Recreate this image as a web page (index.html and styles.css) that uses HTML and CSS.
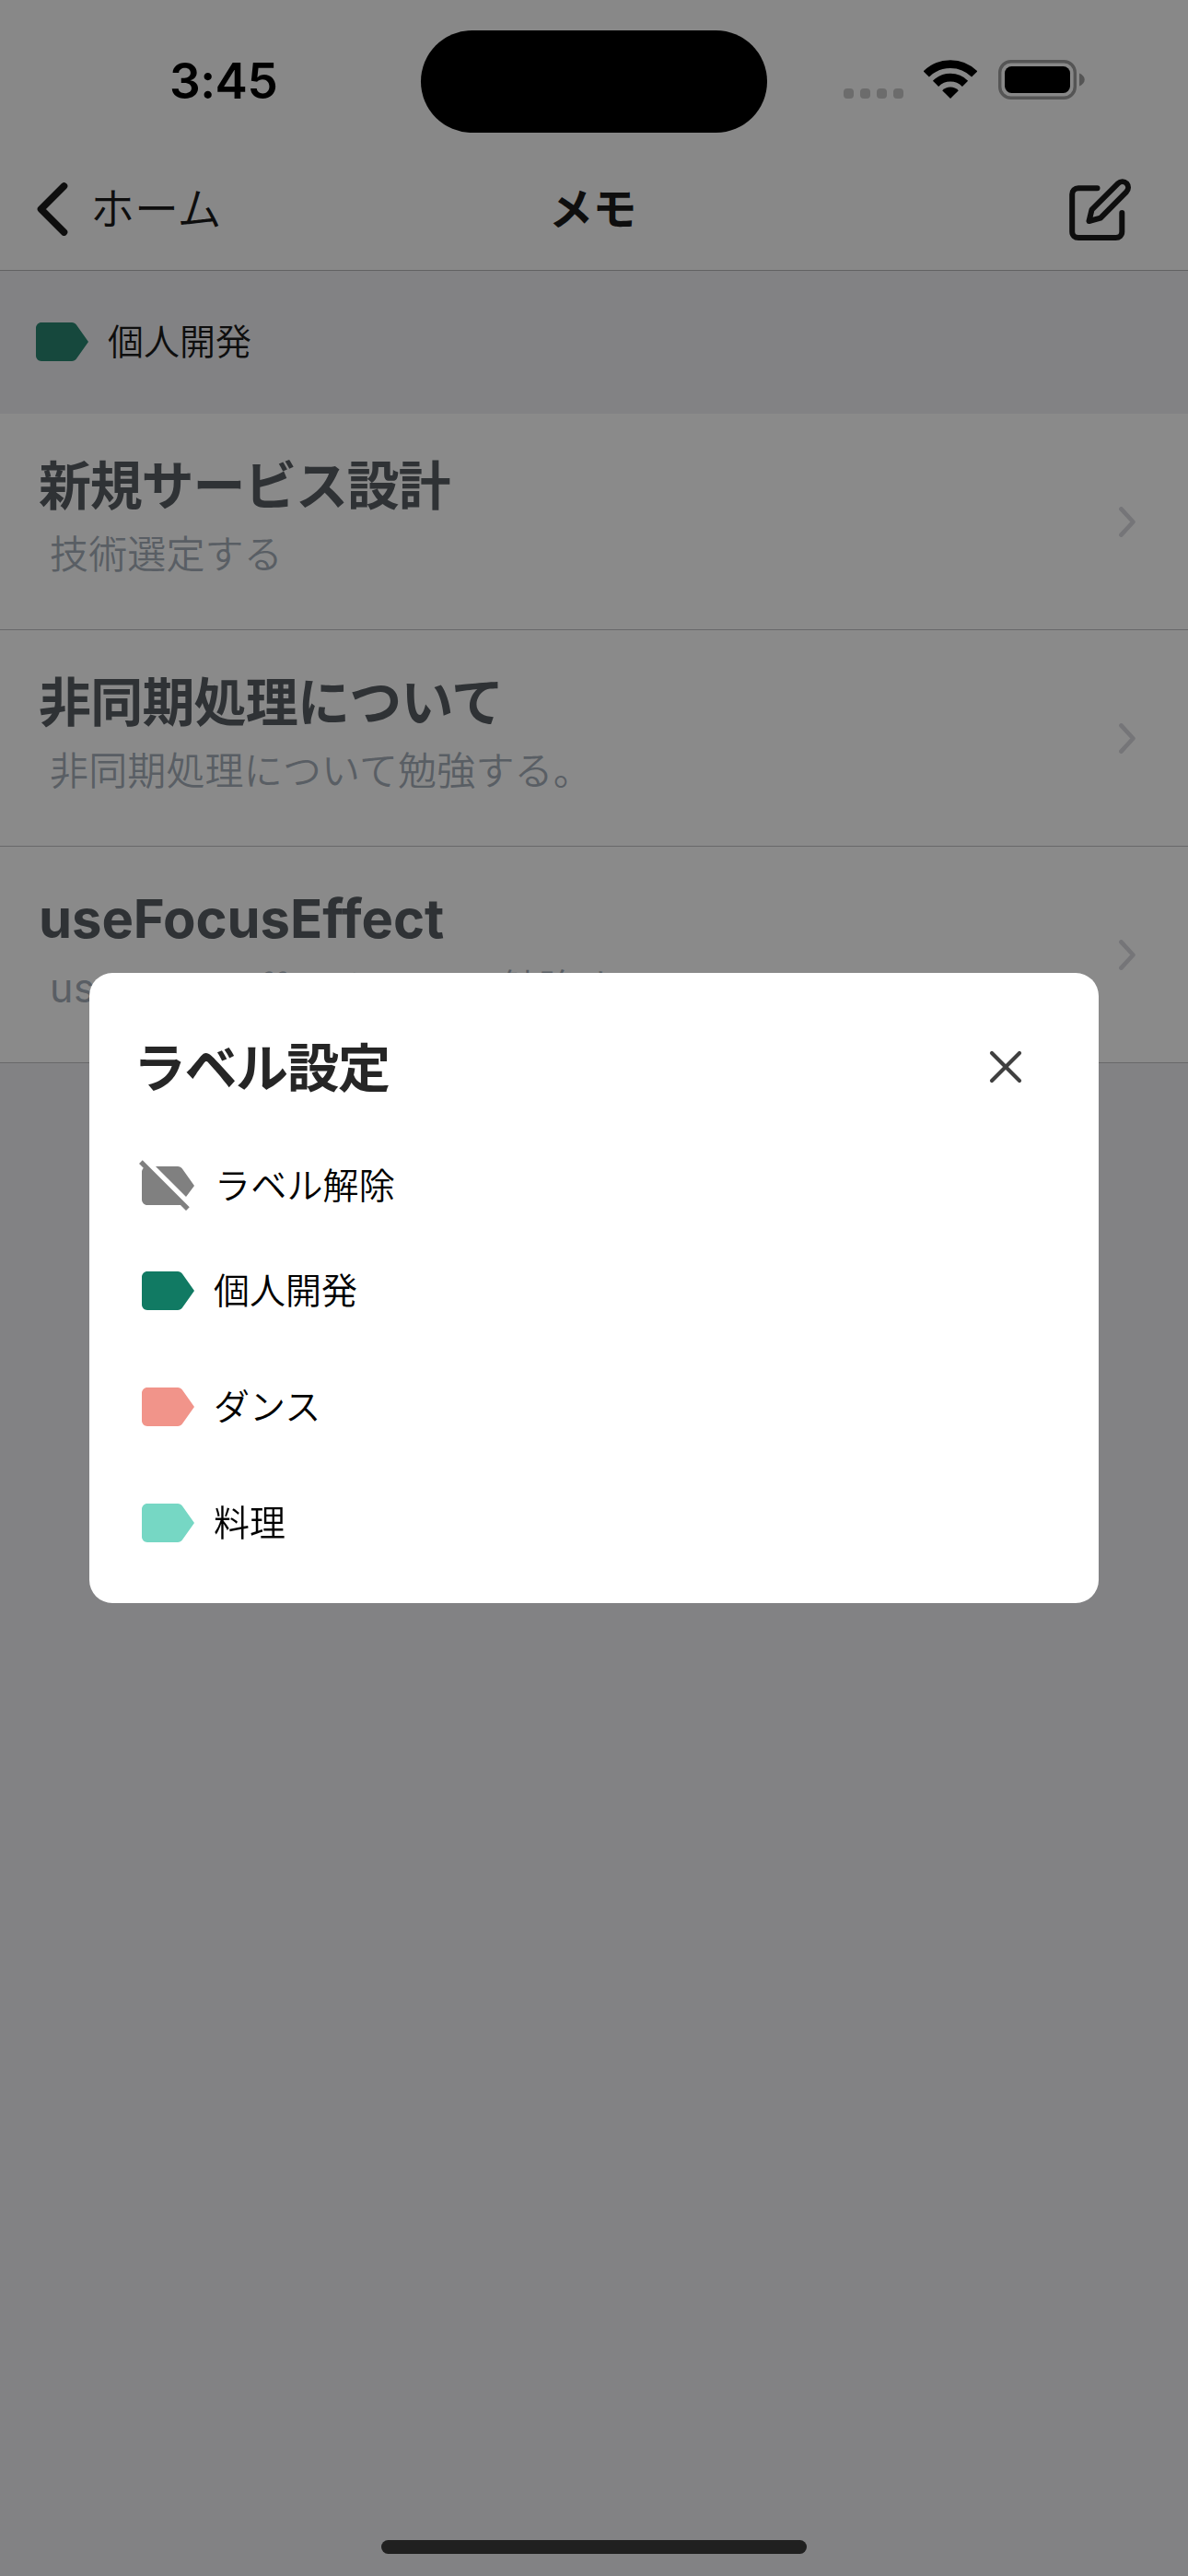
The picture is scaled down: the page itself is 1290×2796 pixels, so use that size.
FILE: index.html
```html
<!DOCTYPE html>
<html lang="ja">
<head>
<meta charset="utf-8">
<title>メモ</title>
<link rel="stylesheet" href="styles.css">
</head>
<body>
<svg class="defs" width="0" height="0">
  <symbol id="tag" viewBox="0 0 24 24"><path d="M17.63 5.84C17.27 5.33 16.67 5 16 5L5 5.01C3.9 5.01 3 5.9 3 7v10c0 1.1.9 1.99 2 1.99L16 19c.67 0 1.27-.33 1.63-.84L22 12l-4.37-6.16z"/></symbol>
  <symbol id="tag-off" viewBox="0 0 24 24"><path d="M3.25 2.75l17 17L19 21l-2-2H5c-1.1 0-2-.9-2-2V7c0-.55.23-1.05.59-1.41L2 4l1.25-1.25zM22 12l-4.37-6.16C17.27 5.33 16.67 5 16 5H8l11 11 3-4z"/></symbol>
  <symbol id="chevron" viewBox="0 0 18 33"><path d="M2.4 2.4L15.4 16.5L2.4 30.6" fill="none" stroke="currentColor" stroke-width="4.6" stroke-linecap="round" stroke-linejoin="round"/></symbol>
</svg>
<div class="screen">
  <header class="status">
    <div class="time">3:45</div>
    <div class="island"></div>
    <div class="indicators">
      <div class="cell"><i></i><i></i><i></i><i></i></div>
      <svg class="wifi" width="58" height="42" viewBox="0 0 58 42">
        <g fill="none" stroke="#000" stroke-width="8.8">
          <path d="M2.8 15.5A37 37 0 0 1 55.2 15.5"/>
          <path d="M13 25.8A22.7 22.7 0 0 1 45 25.8"/>
        </g>
        <path d="M29 42L20.2 33.2A12.4 12.4 0 0 1 37.8 33.2Z"/>
      </svg>
      <svg class="battery" width="94" height="43" viewBox="0 0 94 43">
        <rect x="1.7" y="1.7" width="81.6" height="39.6" rx="12" fill="none" stroke="#555" stroke-width="3.4"/>
        <rect x="7" y="7" width="71" height="29" rx="7.5"/>
        <path d="M88 14.5C91.5 16 93.7 18.5 93.7 21.5S91.5 27 88 28.5Z" fill="#555"/>
      </svg>
    </div>
  </header>
  <nav class="navbar">
    <div class="back">
      <svg width="34" height="58" viewBox="0 0 34 58"><path d="M29.5 4L4.5 29L29.5 54" fill="none" stroke="#0e0e0e" stroke-width="7.6" stroke-linecap="round" stroke-linejoin="round"/></svg>
      <span>ホーム</span>
    </div>
    <h1>メモ</h1>
    <svg class="compose" width="68" height="68" viewBox="-1 -1 68 68" fill="none" stroke="#0e0e0e" stroke-width="6" stroke-linecap="round" stroke-linejoin="round">
      <path d="M30.5 10.2H10C6 10.2 3.2 13 3.2 17V57.5C3.2 61.5 6 64 10 64H50.5C54.5 64 57.3 61.5 57.3 57.5V37"/>
      <path d="M53 5.2C55.7 2.5 59.8 2.5 62.3 5C64.6 7.6 64.6 11.8 62 14.4L34 42.6L21.5 46L24.5 33.7Z"/>
    </svg>
  </nav>
  <div class="current">
    <svg class="tag green"><use href="#tag"/></svg>
    <span>個人開発</span>
  </div>
  <ul class="memos">
    <li><div class="memo"><h2>新規サービス設計</h2><p>技術選定する</p></div><svg class="chev"><use href="#chevron"/></svg></li>
    <li><div class="memo"><h2 class="kana">非同期処理について</h2><p>非同期処理について勉強する。</p></div><svg class="chev"><use href="#chevron"/></svg></li>
    <li><div class="memo"><h2 class="latin">useFocusEffect</h2><p><span class="latin">useFocusEffect</span>について勉強する。</p></div><svg class="chev"><use href="#chevron"/></svg></li>
  </ul>
</div>
<div class="overlay">
  <section class="modal">
    <div class="modal-head">
      <h2>ラベル設定</h2>
      <svg width="36" height="36" viewBox="0 0 36 36"><path d="M3 3L33 33M33 3L3 33" stroke="#404040" stroke-width="4.2" stroke-linecap="round"/></svg>
    </div>
    <ul class="labels">
      <li class="clear"><svg class="tag gray"><use href="#tag-off"/></svg><span>ラベル解除</span></li>
      <li><svg class="tag emerald"><use href="#tag"/></svg><span>個人開発</span></li>
      <li><svg class="tag coral"><use href="#tag"/></svg><span>ダンス</span></li>
      <li><svg class="tag mint"><use href="#tag"/></svg><span>料理</span></li>
    </ul>
  </section>
</div>
<div class="home-indicator"></div>
</body>
</html>
```
FILE: styles.css
```css
* { box-sizing: border-box; margin: 0; padding: 0; }
body {
  width: 1290px;
  height: 2796px;
  overflow: hidden;
  background: #828284;
  font-family: Inter, "Noto Sans CJK JP", sans-serif;
  color: #0e0e0e;
}
ul { list-style: none; }
svg { display: block; flex: none; }
.defs { position: absolute; }

.status {
  display: flex;
  height: 178px;
  padding-top: 33px;
  background: #888;
}
.time {
  width: 457px;
  padding: 23px 0 0 184px;
  font-size: 53px;
  line-height: 64px;
  font-weight: 600;
  letter-spacing: -0.5px;
  color: #000;
}
.island { width: 376px; height: 111px; border-radius: 56px; background: #000; }
.indicators { display: flex; flex: 1; padding: 32px 0 0 83px; }
.cell { display: flex; gap: 7px; padding-top: 31px; width: 87px; }
.cell i { width: 11px; height: 11px; border-radius: 4px; background: #6c6c6c; }
.battery { margin-left: 23px; }

.navbar {
  display: grid;
  grid-template-columns: 1fr auto 1fr;
  align-items: center;
  height: 116px;
  padding: 0 62px 18px 40px;
  background: #888;
  border-bottom: 1px solid #626263;
}
.back { display: flex; align-items: center; gap: 24px; font-size: 48px; line-height: 60px; font-weight: 350; }
.navbar h1 { padding-left: 19px; font-size: 48px; line-height: 60px; font-weight: 700; letter-spacing: -0.5px; }
.compose { justify-self: end; }

.tag { width: 72px; height: 72px; }
.green { fill: #16483d; }
.gray { fill: #808080; }
.emerald { fill: #117a63; }
.coral { fill: #f1948a; }
.mint { fill: #76d7c4; }

.current {
  display: flex;
  height: 155px;
  padding: 41px 30px 0;
}
.current span, .labels span { font-size: 39px; line-height: 71px; font-weight: 350; }
.current span { padding-left: 15px; }

.memos li {
  display: flex;
  align-items: center;
  justify-content: space-between;
  height: 235px;
  padding: 0 57px 0 42px;
  background: #8a8a8a;
  border-bottom: 1px solid #68686a;
}
.memo { padding-bottom: 4px; }
.memos h2 { font-size: 57px; line-height: 76px; font-weight: 700; letter-spacing: -1.2px; color: #2f3235; }
.memos h2.kana { letter-spacing: -0.8px; }
.memos h2.latin { font-size: 58px; line-height: 74px; padding-bottom: 2px; letter-spacing: -0.1px; }
.memos p { padding-left: 12px; font-size: 42px; line-height: 72px; font-weight: 350; letter-spacing: 0.15px; color: #595e64; white-space: nowrap; }
.memos p .latin { font-size: 43px; font-weight: 400; letter-spacing: 0.6px; }
.chev { width: 18px; height: 33px; color: #757578; }

.overlay {
  position: fixed;
  inset: 0;
  display: flex;
  align-items: center;
  justify-content: center;
}
.modal {
  width: 1096px;
  height: 684px;
  padding: 64px 48px 0;
  border-radius: 25px;
  background: #fff;
}
.modal-head {
  display: flex;
  align-items: center;
  justify-content: space-between;
  height: 76px;
  padding: 0 35px 0 0;
}
.modal-head h2 { padding-top: 4px; font-size: 57px; line-height: 72px; font-weight: 700; letter-spacing: -1.5px; color: #262626; }
.labels { padding-top: 55px; }
.labels li { display: flex; height: 126px; }
.labels li.clear { height: 114px; }
.labels span { padding-left: 15px; color: #000; }
.labels .clear span { padding-left: 16px; letter-spacing: 0.2px; }

.home-indicator {
  position: fixed;
  left: 414px;
  bottom: 24px;
  width: 462px;
  height: 15px;
  border-radius: 8px;
  background: #202020;
}
```
